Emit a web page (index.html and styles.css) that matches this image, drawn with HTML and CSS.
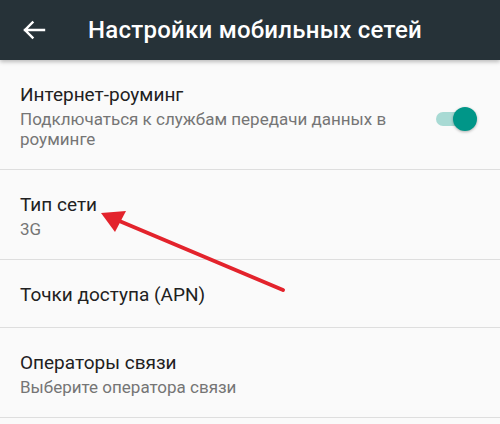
FILE: index.html
```html
<!DOCTYPE html>
<html lang="ru">
<head>
<meta charset="utf-8">
<link rel="stylesheet" href="styles.css">
</head>
<body>
<div class="screen">
  <header class="appbar">
    <svg class="back" width="24" height="20" viewBox="0 0 24 20">
      <path d="M3 10 H22 M10.5 2.5 L3 10 L10.5 17.5" fill="none" stroke="#fff" stroke-width="2.4" stroke-linecap="square"/>
    </svg>
    <h1 class="title">Настройки мобильных сетей</h1>
  </header>
  <ul class="list">
    <li class="row">
      <div class="texts">
        <div class="primary">Интернет-роуминг</div>
        <div class="secondary">Подключаться к службам передачи данных в роуминге</div>
      </div>
      <div class="switch"><span class="track"></span><span class="thumb"></span></div>
    </li>
    <li class="row">
      <div class="texts">
        <div class="primary">Тип сети</div>
        <div class="secondary">3G</div>
      </div>
    </li>
    <li class="row">
      <div class="texts">
        <div class="primary">Точки доступа (APN)</div>
      </div>
    </li>
    <li class="row">
      <div class="texts">
        <div class="primary">Операторы связи</div>
        <div class="secondary">Выберите оператора связи</div>
      </div>
    </li>
  </ul>
  <svg class="pointer" width="500" height="424" viewBox="0 0 500 424">
    <line x1="283" y1="290" x2="117" y2="220" stroke="#e3232c" stroke-width="4" stroke-linecap="round"/>
    <polygon points="101,213 126,211 115,232" fill="#e3232c"/>
  </svg>
</div>
</body>
</html>
```

FILE: styles.css
```css
html, body {
  margin: 0;
  padding: 0;
}
body {
  width: 500px;
  height: 424px;
  overflow: hidden;
  background: #fafafa;
  font-family: Roboto, "Noto Sans", sans-serif;
}
.screen {
  position: relative;
  width: 500px;
  height: 424px;
  background: #fafafa;
}
.appbar {
  height: 60px;
  background: #263238;
  display: flex;
  align-items: center;
  box-shadow: 0 2px 4px rgba(0,0,0,0.25);
  position: relative;
  z-index: 1;
}
.back {
  margin-left: 22px;
  flex: none;
}
.title {
  margin: 0 0 0 42px;
  color: #ffffff;
  font-size: 24px;
  font-weight: 500;
  letter-spacing: 0.25px;
  line-height: 28px;
}
.list {
  list-style: none;
  margin: 0;
  padding: 0;
}
.row {
  display: flex;
  align-items: center;
  padding: 23px 0 20px 20px;
  border-bottom: 1px solid #dedede;
}
.texts {
  flex: 1;
}
.primary {
  color: #212121;
  font-size: 19px;
  line-height: 24px;
}
.secondary {
  margin-top: 2px;
  color: #757575;
  font-size: 17px;
  line-height: 20px;
  max-width: 375px;
}
.switch {
  position: relative;
  width: 36px;
  height: 24px;
  margin: 6px 28px 0 30px;
  flex: none;
}
.track {
  position: absolute;
  left: 0;
  top: 5px;
  width: 35px;
  height: 14px;
  border-radius: 7px;
  background: #a8dad4;
}
.thumb {
  position: absolute;
  left: 17px;
  top: 0;
  width: 24px;
  height: 24px;
  border-radius: 50%;
  background: #009688;
  box-shadow: 0 1px 3px rgba(0,0,0,0.3);
}
.pointer {
  position: absolute;
  left: 0;
  top: 0;
  pointer-events: none;
}
```
